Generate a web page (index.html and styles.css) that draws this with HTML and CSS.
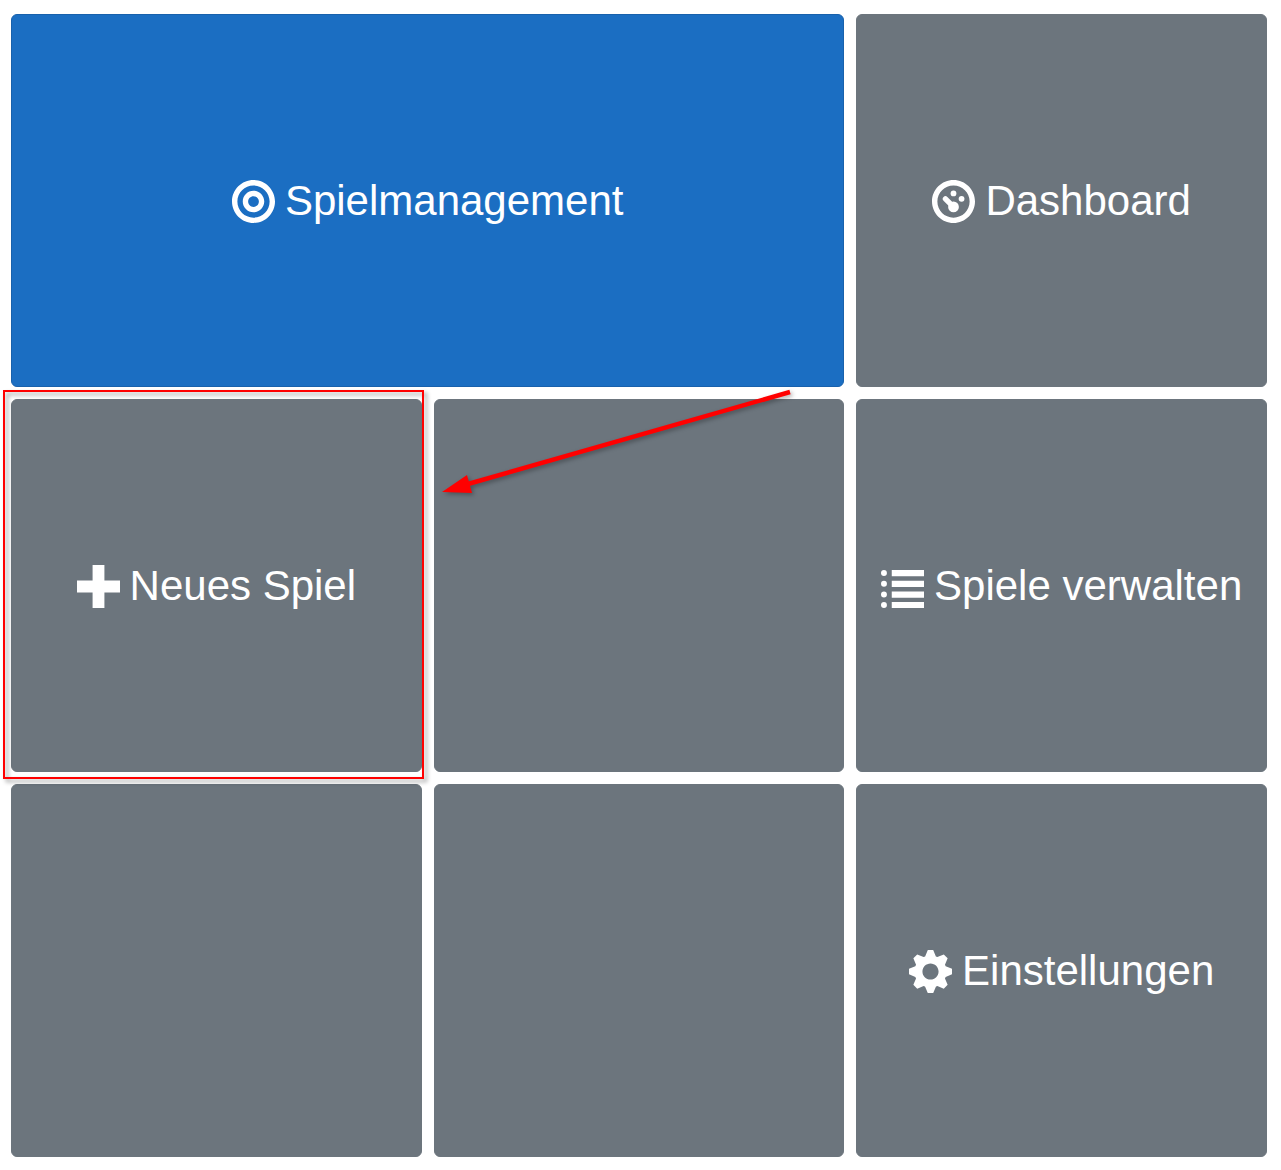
FILE: index.html
```html
<!DOCTYPE html>
<html lang="de">
<head>
<meta charset="utf-8">
<meta name="viewport" content="width=device-width, initial-scale=1">
<title>Spielmanagement</title>
<link rel="stylesheet" href="styles.css">
</head>
<body>
<main class="tiles">
  <button type="button" class="tile tile-primary tile-wide">
    <svg class="icon" viewBox="0 0 8 8" aria-hidden="true"><path d="M4 0c-2.2 0-4 1.8-4 4s1.8 4 4 4 4-1.8 4-4-1.8-4-4-4zm0 1c1.66 0 3 1.34 3 3s-1.34 3-3 3-3-1.34-3-3 1.34-3 3-3zm0 1c-1.1 0-2 .9-2 2s.9 2 2 2 2-.9 2-2-.9-2-2-2zm0 1c.56 0 1 .44 1 1s-.44 1-1 1-1-.44-1-1 .44-1 1-1z"/></svg>
    <span>Spielmanagement</span>
  </button>
  <button type="button" class="tile">
    <svg class="icon" viewBox="0 0 8 8" aria-hidden="true"><path d="M4 0c-2.2 0-4 1.8-4 4s1.8 4 4 4 4-1.8 4-4-1.8-4-4-4zm0 1c1.66 0 3 1.34 3 3s-1.34 3-3 3-3-1.34-3-3 1.34-3 3-3z"/><circle cx="4" cy="2.5" r=".54"/><circle cx="5.5" cy="3.5" r=".54"/><circle cx="4" cy="5" r="1"/><path d="M2.5 3.5L4 5" stroke="currentColor" stroke-width="1" stroke-linecap="round"/></svg>
    <span>Dashboard</span>
  </button>
  <div class="cell">
    <button type="button" class="tile">
      <svg class="icon" viewBox="0 0 8 8" aria-hidden="true"><path d="M2.9 0v2.9h-2.9v2.2h2.9v2.9h2.2v-2.9h2.9v-2.2h-2.9v-2.9z"/></svg>
      <span>Neues Spiel</span>
    </button>
    <div class="highlight"></div>
  </div>
  <div class="cell">
    <div class="tile"></div>
    <svg class="arrow" viewBox="0 0 360 110" aria-hidden="true">
      <path d="M34 94L356 2" stroke="#f00" stroke-width="4.5"/>
      <path d="M8 102L33 85L38 103z" fill="#f00"/>
    </svg>
  </div>
  <button type="button" class="tile">
    <svg class="icon" viewBox="0 0 8 8" aria-hidden="true"><path d="M2 .95h6v1.15h-6zM2 2.95h6v1.15h-6zM2 4.95h6v1.15h-6zM2 6.9h6v1.1h-6z"/><circle cx=".55" cy="1.5" r=".55"/><circle cx=".55" cy="3.5" r=".55"/><circle cx=".55" cy="5.5" r=".55"/><circle cx=".55" cy="7.45" r=".55"/></svg>
    <span>Spiele verwalten</span>
  </button>
  <div class="tile"></div>
  <div class="tile"></div>
  <button type="button" class="tile">
    <svg class="icon" viewBox="0 0 8 8" aria-hidden="true"><path d="M3.5 0l-.5 1.19c-.1.03-.19.08-.28.13l-1.19-.5-.72.72.5 1.19c-.05.1-.09.18-.13.28l-1.19.5v1l1.19.5c.04.1.08.18.13.28l-.5 1.19.72.72 1.19-.5c.09.04.18.09.28.13l.5 1.19h1l.5-1.19c.09-.04.19-.08.28-.13l1.19.5.72-.72-.5-1.19c.04-.09.09-.19.13-.28l1.19-.5v-1l-1.19-.5c-.03-.09-.08-.19-.13-.28l.5-1.19-.72-.72-1.19.5c-.09-.04-.19-.09-.28-.13l-.5-1.19h-1zm.5 2.5c.83 0 1.5.67 1.5 1.5s-.67 1.5-1.5 1.5-1.5-.67-1.5-1.5.67-1.5 1.5-1.5z"/></svg>
    <span>Einstellungen</span>
  </button>
</main>
</body>
</html>
```
FILE: styles.css
```css
* {
  box-sizing: border-box;
}

body {
  margin: 0;
  background: #fff;
  font-family: "Liberation Sans", Arial, sans-serif;
}

.tiles {
  display: grid;
  grid-template-columns: repeat(3, minmax(0, 1fr));
  grid-auto-rows: 1fr;
  gap: 12px;
  min-height: 100vh;
  padding: 14px 14px 13px 11px;
}

.cell {
  position: relative;
  display: grid;
}

.tile {
  display: flex;
  align-items: center;
  justify-content: center;
  gap: 10px;
  padding: 0 12px;
  border: 1px solid #6c757d;
  border-radius: 6px;
  background: #6c757d;
  color: #fff;
  font-family: inherit;
  font-size: 42px;
  line-height: 64px;
  white-space: nowrap;
}

.tile-primary {
  border-color: #1861ac;
  background: #1b6ec2;
}

.tile-wide {
  grid-column: span 2;
}

.icon {
  flex: none;
  width: 43px;
  height: 43px;
  margin-top: 2px;
  fill: currentColor;
}

.highlight {
  position: absolute;
  inset: -9px -2px -7px -8px;
  border: 2px solid #f00;
  filter: drop-shadow(3px 3px 2px rgba(0, 0, 0, 0.4));
  pointer-events: none;
}

.arrow {
  position: absolute;
  top: -9px;
  left: 0;
  width: 360px;
  height: 110px;
  overflow: visible;
  filter: drop-shadow(2px 2px 2px rgba(0, 0, 0, 0.3));
  pointer-events: none;
}
```
